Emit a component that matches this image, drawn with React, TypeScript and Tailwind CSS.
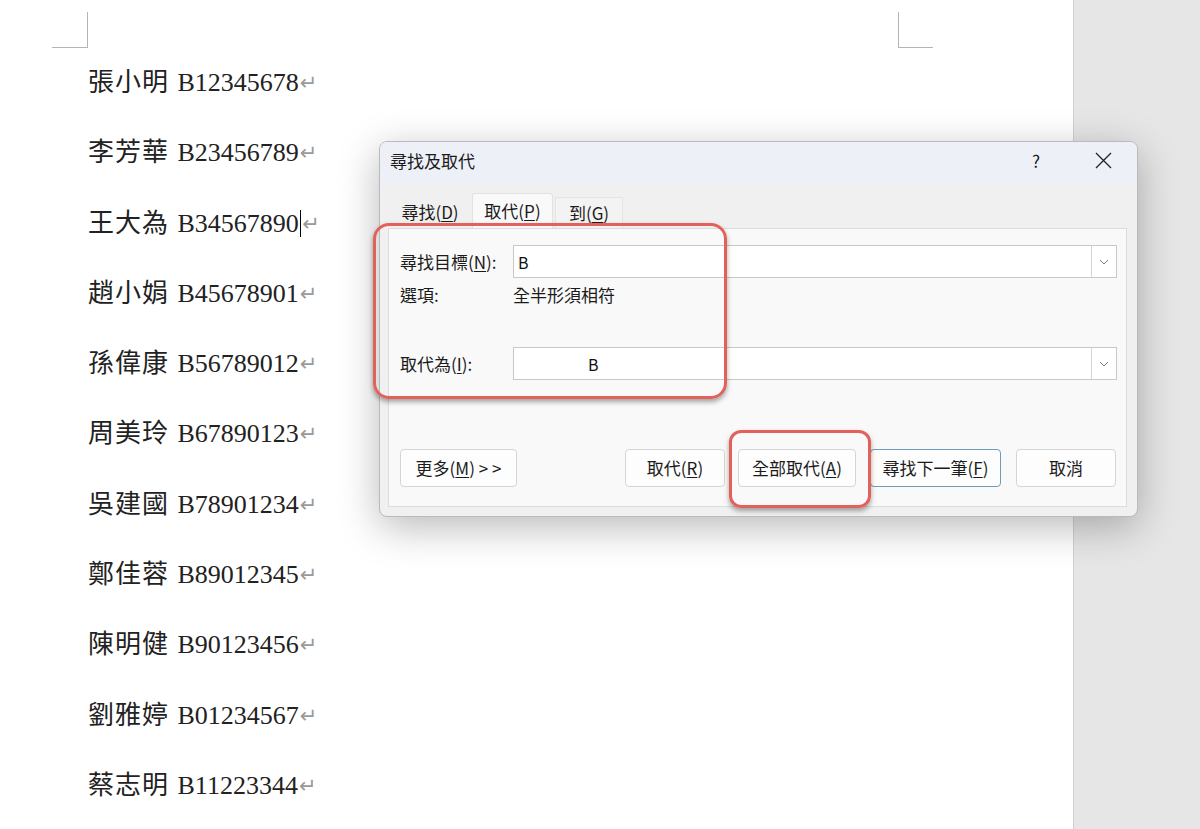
import React from "react";

const lines = [
  ["張小明", " B12345678"],
  ["李芳華", " B23456789"],
  ["王大為", " B34567890"],
  ["趙小娟", " B45678901"],
  ["孫偉康", " B56789012"],
  ["周美玲", " B67890123"],
  ["吳建國", " B78901234"],
  ["鄭佳蓉", " B89012345"],
  ["陳明健", " B90123456"],
  ["劉雅婷", " B01234567"],
  ["蔡志明", " B11223344"],
];

const docFont = { fontFamily: '"Liberation Serif", "Noto Sans CJK TC", serif' };
const uiFont = { fontFamily: '"Noto Sans CJK TC", "Noto Sans", sans-serif' };

function Key({ label, k, suffix = "" }: { label: string; k: string; suffix?: string }) {
  return (
    <span className="whitespace-pre">
      {label}(<span className="underline underline-offset-2">{k}</span>){suffix}
    </span>
  );
}

function Chevron() {
  return (
    <svg width="10" height="6" viewBox="0 0 10 6" fill="none">
      <path d="M1 1l4 4 4-4" stroke="#7a7a7a" strokeWidth="1" />
    </svg>
  );
}

function ComboInput({ children, className = "" }: { children: React.ReactNode; className?: string }) {
  return (
    <div className="flex h-[33px] flex-1 items-stretch border border-[#c8c8c8] bg-white">
      <div className={`flex flex-1 items-center text-[16px] text-[#111] ${className}`}>{children}</div>
      <div className="flex w-[25px] items-center justify-center border-l border-[#d6d6d6]">
        <Chevron />
      </div>
    </div>
  );
}

function Btn({ children, w, primary }: { children: React.ReactNode; w: string; primary?: boolean }) {
  return (
    <div
      className={`flex h-[38px] ${w} items-center justify-center rounded-[4px] border bg-[#fdfdfd] text-[17px] text-[#1b1b1b] ${
        primary ? "border-[#6f9bb8]" : "border-[#d5d5d5]"
      }`}
    >
      {children}
    </div>
  );
}

export default function App() {
  return (
    <div className="relative flex h-[829px] w-[1200px] overflow-hidden bg-white">
      {/* document page */}
      <div className="w-[1073px] bg-white">
        <div className="flex justify-between pl-[52px] pr-[140px] pt-[12px]">
          <div className="h-[36px] w-[36px] border-b border-r border-[#b4b4b4]" />
          <div className="h-[36px] w-[35px] border-b border-l border-[#b4b4b4]" />
        </div>
        <div className="pl-[88px] text-[26px] leading-[70.3px] text-[#222]" style={docFont}>
          {lines.map(([name, id], i) => (
            <div key={i} className="flex items-center whitespace-pre">
              <span className="tracking-[1px]">{name}</span>
              <span className="ml-[2px]">{id}</span>
              {i === 2 && <span className="ml-[1px] inline-block h-[27px] w-[1.5px] bg-black" />}
              <span
                className="ml-[1px] text-[21px] text-[#9a9a9a]"
                style={{ fontFamily: '"DejaVu Sans", sans-serif' }}
              >
                ↵
              </span>
            </div>
          ))}
        </div>
      </div>
      <div className="flex-1 border-l border-[#d2d2d2] bg-[#e6e6e6]" />

      {/* dialog */}
      <div
        className="absolute left-[379px] top-[141px] flex h-[376px] w-[759px] flex-col overflow-hidden rounded-[8px] border border-[#b9b9bf] bg-[#f0f0f0] shadow-[0_10px_40px_rgba(0,0,0,0.28)]"
        style={uiFont}
      >
        <div className="flex h-[43px] items-center bg-[#eef0f8] pb-[6px] pl-[10px] pr-[25px] text-[17px] text-[#1b1b1b]">
          <span className="flex-1">尋找及取代</span>
          <span className="mr-[55px] text-[17px]">?</span>
          <svg width="17" height="17" viewBox="0 0 17 17">
            <path d="M1 1l15 15M16 1L1 16" stroke="#222" strokeWidth="1.3" />
          </svg>
        </div>
        <div className="flex flex-1 flex-col pl-[8px] pr-[10px] pt-[8px] pb-[9px]">
          <div className="flex h-[35px] items-end text-[17px] text-[#1b1b1b]">
            <div className="flex h-[33px] w-[84px] items-center justify-center">
              <Key label="尋找" k="D" />
            </div>
            <div className="flex h-[35px] w-[81px] items-center justify-center rounded-t-[3px] border-x border-t border-[#e2e2e2] bg-[#f9f9f9]">
              <Key label="取代" k="P" />
            </div>
            <div className="ml-[2px] flex h-[31px] w-[68px] items-center justify-center border-x border-t border-[#e4e4e4] bg-[#f3f3f3]">
              <Key label="到" k="G" />
            </div>
          </div>
          <div className="flex flex-1 flex-col border border-[#dcdcdc] bg-[#f9f9f9] pl-[11px] pr-[9px] pt-[16px]">
            <div className="flex items-center text-[17px] text-[#1b1b1b]">
              <div className="w-[113px]">
                <Key label="尋找目標" k="N" suffix=":" />
              </div>
              <ComboInput className="pl-[4px]">B</ComboInput>
            </div>
            <div className="mt-[5px] flex h-[24px] items-center text-[17px] text-[#1b1b1b]">
              <div className="w-[113px]">選項:</div>
              <div>全半形須相符</div>
            </div>
            <div className="mt-[40px] flex items-center text-[17px] text-[#1b1b1b]">
              <div className="w-[113px]">
                <Key label="取代為" k="I" suffix=":" />
              </div>
              <ComboInput className="pl-[74px]">B</ComboInput>
            </div>
            <div className="mt-[69px] flex items-center pr-[1px]">
              <Btn w="w-[117px]">
                <Key label="更多" k="M" suffix=" > >" />
              </Btn>
              <div className="flex-1" />
              <Btn w="w-[100px]">
                <Key label="取代" k="R" />
              </Btn>
              <div className="w-[13px]" />
              <Btn w="w-[118px]">
                <Key label="全部取代" k="A" />
              </Btn>
              <div className="w-[14px]" />
              <Btn w="w-[131px]" primary>
                <Key label="尋找下一筆" k="F" />
              </Btn>
              <div className="w-[15px]" />
              <Btn w="w-[100px]">取消</Btn>
            </div>
          </div>
        </div>
      </div>

      {/* annotation highlights */}
      <div className="absolute left-[373px] top-[223px] h-[176px] w-[354px] rounded-[16px] border-[3.5px] border-[#e2625b] shadow-[0_3px_5px_rgba(0,0,0,0.35)]" />
      <div className="absolute left-[729px] top-[430px] h-[78px] w-[142px] rounded-[12px] border-[3.5px] border-[#e2625b] shadow-[0_3px_5px_rgba(0,0,0,0.35)]" />
    </div>
  );
}
